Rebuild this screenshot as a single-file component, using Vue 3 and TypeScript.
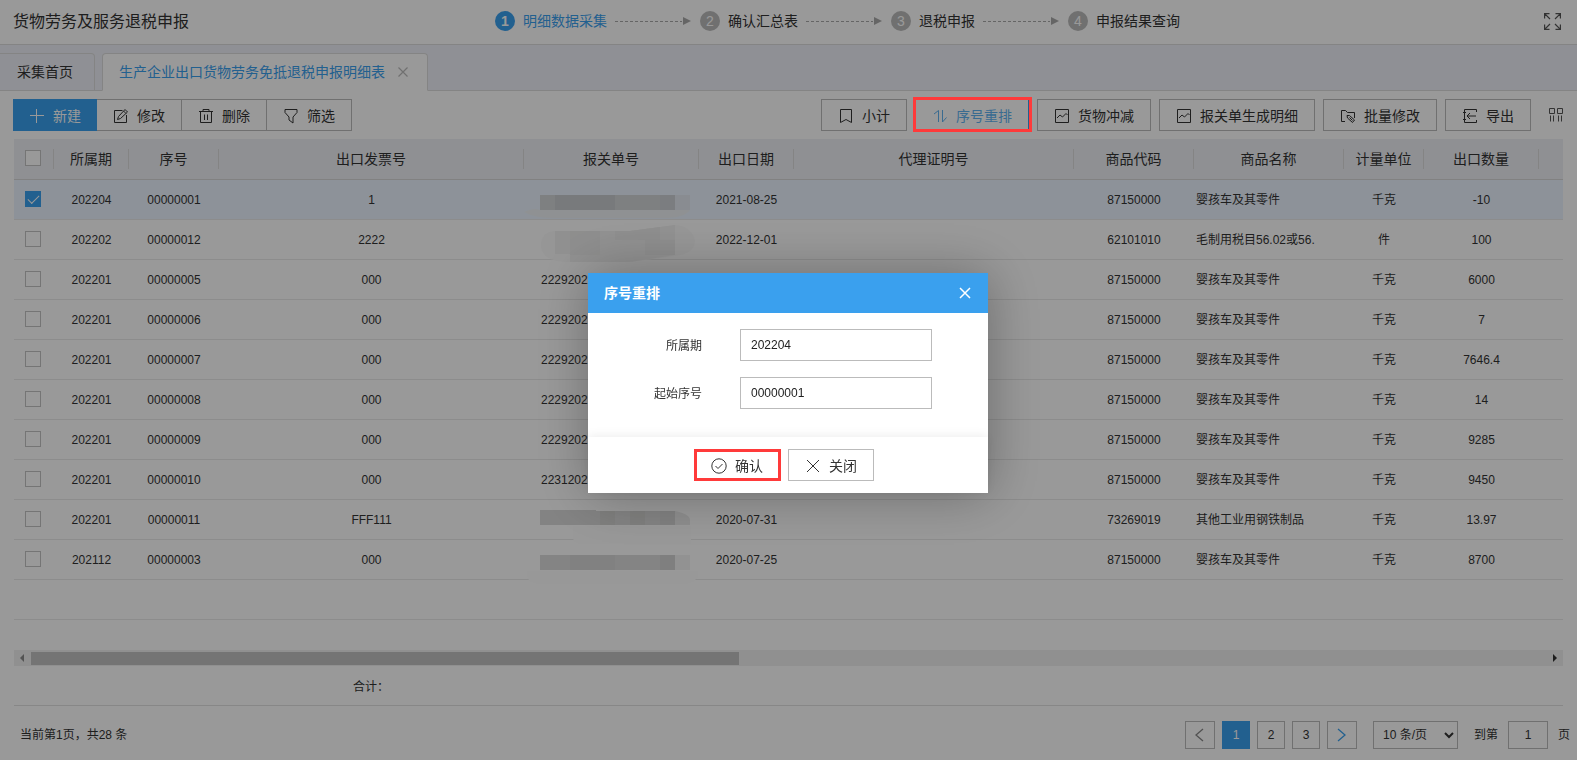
<script setup lang="ts">
import { ref } from 'vue'

interface Step {
  no: number
  label: string
}

interface Row {
  id: number
  checked: boolean
  period: string
  seq: string
  invoice: string
  customs: string
  mask: number
  date: string
  code: string
  name: string
  unit: string
  qty: string
}

const steps: Step[] = [
  { no: 1, label: '明细数据采集' },
  { no: 2, label: '确认汇总表' },
  { no: 3, label: '退税申报' },
  { no: 4, label: '申报结果查询' },
]

const headers: string[] = [
  '所属期', '序号', '出口发票号', '报关单号', '出口日期',
  '代理证明号', '商品代码', '商品名称', '计量单位', '出口数量',
]

const stroller = '婴孩车及其零件'

function makeRow(
  id: number, period: string, seq: string, invoice: string, customs: string, mask: number,
  date: string, code: string, name: string, unit: string, qty: string,
): Row {
  return { id, checked: id === 1, period, seq, invoice, customs, mask, date, code, name, unit, qty }
}

const rows = ref<Row[]>([
  makeRow(1, '202204', '00000001', '1', '', 1, '2021-08-25', '87150000', stroller, '千克', '-10'),
  makeRow(2, '202202', '00000012', '2222', '', 2, '2022-12-01', '62101010', '毛制用税目56.02或56.', '件', '100'),
  makeRow(3, '202201', '00000005', '000', '2229202', 0, '', '87150000', stroller, '千克', '6000'),
  makeRow(4, '202201', '00000006', '000', '2229202', 0, '', '87150000', stroller, '千克', '7'),
  makeRow(5, '202201', '00000007', '000', '2229202', 0, '', '87150000', stroller, '千克', '7646.4'),
  makeRow(6, '202201', '00000008', '000', '2229202', 0, '', '87150000', stroller, '千克', '14'),
  makeRow(7, '202201', '00000009', '000', '2229202', 0, '', '87150000', stroller, '千克', '9285'),
  makeRow(8, '202201', '00000010', '000', '2231202', 0, '', '87150000', stroller, '千克', '9450'),
  makeRow(9, '202201', '00000011', 'FFF111', '', 3, '2020-07-31', '73269019', '其他工业用钢铁制品', '千克', '13.97'),
  makeRow(10, '202112', '00000003', '000', '', 4, '2020-07-25', '87150000', stroller, '千克', '8700'),
])

const allChecked = ref(false)
const pages: number[] = [1, 2, 3]
const currentPage = ref(1)
const jumpPage = ref('1')
const pageSize = ref('10')
const period = ref('202204')
const startNo = ref('00000001')
</script>

<template>
  <div class="page">
    <header class="top">
      <h1 class="title">货物劳务及服务退税申报</h1>
      <ol class="steps">
        <li v-for="(s, i) in steps" :key="s.no" class="step" :class="{ active: i === 0 }">
          <span class="dot">{{ s.no }}</span>
          <span class="step-label">{{ s.label }}</span>
          <svg v-if="i < steps.length - 1" class="arrow" width="76" height="10" viewBox="0 0 76 10">
            <path d="M0 5.5H67" stroke="#a8a8a8" stroke-dasharray="3 2" />
            <path d="M68 1L76 5L68 9Z" fill="#a8a8a8" />
          </svg>
        </li>
      </ol>
      <div class="top-end">
        <button class="bare" aria-label="全屏">
          <svg width="17" height="17" viewBox="0 0 17 17" fill="none" stroke="#555" stroke-width="1.2">
            <path d="M.6 5.5V.6H5.5M.6.6L6 6M11.5.6H16.4V5.5M16.4.6L11 6M.6 11.5V16.4H5.5M.6 16.4L6 11M11.5 16.4H16.4V11.5M16.4 16.4L11 11" />
          </svg>
        </button>
      </div>
    </header>

    <nav class="tabs">
      <a href="#" class="tab first">采集首页</a>
      <a href="#" class="tab current">
        生产企业出口货物劳务免抵退税申报明细表
        <svg width="10" height="10" viewBox="0 0 10 10" stroke="#bbb" stroke-width="1.2">
          <path d="M.5.5L9.5 9.5M9.5.5L.5 9.5" />
        </svg>
      </a>
    </nav>

    <main class="content">
      <div class="toolbar">
        <div class="group">
          <button class="btn primary">
            <svg class="ico" viewBox="0 0 16 16"><path d="M7.500 1V15M1 7.500H15" /></svg>新建
          </button>
          <button class="btn">
            <svg class="ico" viewBox="0 0 16 16"><path d="M9.500 2.500H1.500V14.500H13.500V7M4.500 11.500L5.500 8.500L12 1.500L14.500 4L7.500 10.500ZM10.500 3L13 5.500" /></svg>修改
          </button>
          <button class="btn">
            <svg class="ico" viewBox="0 0 16 16"><path d="M1 3.500H15M5 3.500V1.500H11V3.500M2.500 3.500V14.500H13.500V3.500M6.500 6.500V12M9.500 6.500V12" /></svg>删除
          </button>
          <button class="btn">
            <svg class="ico" viewBox="0 0 16 16"><path d="M2 1.500H14V4.500L10 9V15L6 12V9L2 4.500Z" /></svg>筛选
          </button>
        </div>
        <div class="group right">
          <button class="btn">
            <svg class="ico" viewBox="0 0 16 16"><path d="M2.500 1.500H13.500V14.500L8 11.500L2.500 14.500Z" /></svg>小计
          </button>
          <div class="marked toolbar-mark">
            <button class="btn hover">
              <svg class="ico" viewBox="0 0 16 16"><path d="M2 6L6.500 2.500V14M10.500 2V14L14.500 9.500" /></svg>序号重排
            </button>
          </div>
          <button class="btn">
            <svg class="ico" viewBox="0 0 16 16"><path d="M1.500 1.500H14.500V14.500H1.500ZM3 10L6 7L8.500 9L12 5.500L13.500 7" /></svg>货物冲减
          </button>
          <button class="btn">
            <svg class="ico" viewBox="0 0 16 16"><path d="M1.500 1.500H14.500V14.500H1.500ZM3 10L6 7L8.500 9L12 5.500L13.500 7" /></svg>报关单生成明细
          </button>
          <button class="btn">
            <svg class="ico" viewBox="0 0 16 16"><path d="M5 13.500H1.500V2.500H5.500L7.500 4.500H14.500V10M7 7.500H9.500L14.500 12L12.500 14.500L7.500 10ZM9.500 9.500L12.500 12.500" /></svg>批量修改
          </button>
          <button class="btn">
            <svg class="ico" viewBox="0 0 16 16"><path d="M14.500 4V1.500H2.500V14.500H14.500V12M1 4.500H4M1 11.500H4M14 8H5M8 5L5 8L8 11" /></svg>导出
          </button>
          <button class="bare columns" aria-label="列设置">
            <svg width="14" height="14" viewBox="0 0 14 14" fill="none" stroke="#555">
              <path d="M.500.500H5.500V5.500H.500ZM8.500.500H13.500V5.500H8.500ZM1.500 7.500V13.500M4.500 7.500V13.500M9.500 7.500V13.500M12.500 7.500V13.500" />
            </svg>
          </button>
        </div>
      </div>

      <table class="grid">
        <colgroup>
          <col class="c-check" /><col class="c-period" /><col class="c-seq" /><col class="c-invoice" />
          <col class="c-customs" /><col class="c-date" /><col class="c-agent" /><col class="c-code" />
          <col class="c-name" /><col class="c-unit" /><col class="c-qty" /><col />
        </colgroup>
        <thead>
          <tr>
            <th><div class="th"><input v-model="allChecked" type="checkbox" aria-label="全选" /></div></th>
            <th v-for="h in headers" :key="h"><div class="th">{{ h }}</div></th>
            <th></th>
          </tr>
        </thead>
        <tbody>
          <tr v-for="r in rows" :key="r.id" :class="{ selected: r.checked }">
            <td class="check"><input v-model="r.checked" type="checkbox" :aria-label="r.seq" /></td>
            <td>{{ r.period }}</td>
            <td>{{ r.seq }}</td>
            <td>{{ r.invoice }}</td>
            <td class="customs">
              <svg v-if="r.mask === 1" class="mask" viewBox="0 0 175 39">
                <path d="M0 32Q10 27 16 30H166Q160 38 140 38H30Q10 38 0 32Z" fill="#eef2f6" />
                <path d="M16 15H151V30H16Z" fill="#d2d5d8" />
                <path d="M31 15H91V30H31Z" fill="#c8cccf" />
                <path d="M136 15H151V30H136Z" fill="#cdd0d6" />
                <path d="M151 15H166V30H151Z" fill="#e4eaf2" />
              </svg>
              <svg v-else-if="r.mask === 2" class="mask" viewBox="0 0 175 39">
                <path d="M17 26Q17 12 31 11H106L151 5Q167 6 171 20Q171 34 151 36L106 42H46Q18 42 17 26Z" fill="#fafafa" />
                <path d="M31 11H106L151 5V35L106 42H46V34H31Z" fill="#f1f1f1" />
                <path d="M46 11H76V35H46ZM91 11H106L136 7V20H91Z" fill="#ededec" />
                <path d="M121 20H151V35H121Z" fill="#ececec" />
              </svg>
              <svg v-else-if="r.mask === 3" class="mask" viewBox="0 0 175 39">
                <path d="M49 26H167V44H60Q49 44 49 38Z" fill="#fdfdfd" />
                <path d="M16 10H72V11H151V25H16Z" fill="#dadada" />
                <path d="M76 11H91V25H76ZM106 11H121V25H106Z" fill="#d4d4d2" />
                <path d="M136 11H151V25H136Z" fill="#d6d6d6" />
                <path d="M151 11Q166 14 166 20V25H151Z" fill="#ececec" />
              </svg>
              <svg v-else-if="r.mask === 4" class="mask" viewBox="0 0 175 39">
                <path d="M3 31H174V36Q170 44 158 44H18Q5 44 3 36Z" fill="#fdfdfd" />
                <path d="M16 15H151V30H16Z" fill="#dcdcdc" />
                <path d="M46 15H91V30H46Z" fill="#d7d7d8" />
                <path d="M136 15H151V30H136Z" fill="#d4d4d4" />
                <path d="M151 15H166V30H151Z" fill="#f4f4f4" />
              </svg>
              <template v-else>{{ r.customs }}</template>
            </td>
            <td>{{ r.date }}</td>
            <td></td>
            <td>{{ r.code }}</td>
            <td class="name">{{ r.name }}</td>
            <td>{{ r.unit }}</td>
            <td>{{ r.qty }}</td>
            <td></td>
          </tr>
          <tr><td colspan="12"></td></tr>
        </tbody>
      </table>
      <div class="rest"></div>

      <div class="scrollbar">
        <svg width="17" height="16" viewBox="0 0 17 16"><path d="M10 4V12L6 8Z" fill="#8a8a8a" /></svg>
        <div class="track"><div class="thumb"></div></div>
        <svg width="17" height="16" viewBox="0 0 17 16"><path d="M7 4V12L11 8Z" fill="#333" /></svg>
      </div>

      <div class="total"><span>合计：</span></div>
    </main>

    <footer class="footer">
      <span class="count">当前第1页，共28 条</span>
      <div class="pager">
        <button class="pg wide" aria-label="上一页">
          <svg width="9" height="14" viewBox="0 0 9 14" fill="none" stroke="#888" stroke-width="1.300"><path d="M8 1L1 7L8 13" /></svg>
        </button>
        <button
          v-for="p in pages" :key="p" class="pg" :class="{ on: p === currentPage }"
          @click="currentPage = p"
        >{{ p }}</button>
        <button class="pg wide" aria-label="下一页">
          <svg width="9" height="14" viewBox="0 0 9 14" fill="none" stroke="#3aa0ee" stroke-width="1.300"><path d="M1 1L8 7L1 13" /></svg>
        </button>
        <select v-model="pageSize" class="size" aria-label="每页条数">
          <option value="10">10 条/页</option>
          <option value="20">20 条/页</option>
        </select>
        <label class="jump"><span>到第</span><input v-model="jumpPage" type="text" /><span>页</span></label>
      </div>
    </footer>

    <div class="overlay">
      <section class="dialog" role="dialog" aria-labelledby="dialog-title">
        <div class="dialog-head">
          <h2 id="dialog-title">序号重排</h2>
          <button class="bare" aria-label="关闭窗口">
            <svg width="12" height="12" viewBox="0 0 12 12" stroke="#fff" stroke-width="1.500"><path d="M1 1L11 11M11 1L1 11" /></svg>
          </button>
        </div>
        <div class="dialog-body">
          <div class="field">
            <label for="f-period">所属期</label>
            <input id="f-period" v-model="period" type="text" />
          </div>
          <div class="field">
            <label for="f-start">起始序号</label>
            <input id="f-start" v-model="startNo" type="text" />
          </div>
        </div>
        <div class="dialog-foot">
          <div class="marked dialog-mark">
            <button class="btn">
              <svg class="ico" viewBox="0 0 16 16"><circle cx="8" cy="8" r="7.200" /><path d="M4.500 8L7 10.500L11.500 6" /></svg>确认
            </button>
          </div>
          <button class="btn">
            <svg class="ico" viewBox="0 0 16 16"><path d="M2 2L14 14M14 2L2 14" /></svg>关闭
          </button>
        </div>
      </section>
    </div>
  </div>
</template>

<style>
body {
  margin: 0;
}
</style>

<style scoped>
.page,
.page button,
.page input,
.page select {
  font-family: "Liberation Sans", "Noto Sans CJK SC", sans-serif;
}

.page {
  display: flex;
  flex-direction: column;
  min-height: 100vh;
  background: #fff;
  color: #333;
  font-size: 12px;
}

.page * {
  box-sizing: border-box;
}

.bare {
  display: flex;
  padding: 0;
  border: 0;
  background: none;
}

.top {
  display: flex;
  align-items: center;
  height: 45px;
  padding: 0 16px 2px 13px;
  border-bottom: 1px solid #dcdcdc;
}

.title {
  margin: 0;
  padding-bottom: 2px;
  font-size: 16px;
  font-weight: 400;
}

.steps {
  display: flex;
  flex: 1;
  justify-content: center;
  gap: 9px;
  margin: 0;
  padding: 0;
  list-style: none;
}

.step {
  display: flex;
  align-items: center;
  gap: 8px;
  font-size: 14px;
  line-height: 20px;
}

.dot {
  width: 20px;
  height: 20px;
  border-radius: 50%;
  background: #bbb;
  color: #fff;
  text-align: center;
}

.active .dot {
  background: #3aa0ee;
  font-weight: 700;
}

.active .step-label {
  color: #3aa0ee;
}

.top-end {
  display: flex;
  justify-content: flex-end;
  width: 75px;
}

.tabs {
  display: flex;
  align-items: flex-end;
  gap: 7px;
  height: 46px;
  background: #eff1f8;
  box-shadow: inset 0 -1px #dcdcdc;
}

.tab {
  display: flex;
  align-items: center;
  gap: 13px;
  height: 38px;
  border: 1px solid #dcdcdc;
  border-radius: 4px 4px 0 0;
  color: #333;
  font-size: 14px;
  text-decoration: none;
}

.first {
  padding: 0 21px 2px 17px;
  border-left: 0;
  border-top-left-radius: 0;
}

.current {
  padding: 0 19px 2px 16px;
  border-bottom-color: #fff;
  background: #fff;
  color: #3aa0ee;
}

.current svg {
  margin-top: 2px;
}

.content {
  padding: 8px 14px 0;
}

.toolbar {
  display: flex;
  justify-content: space-between;
  margin: 0 0 8px -1px;
}

.group {
  display: flex;
}

.group .btn + .btn {
  margin-left: -1px;
}

.right {
  gap: 8px;
}

.right .btn + .btn {
  margin-left: 0;
}

.btn {
  display: flex;
  align-items: center;
  gap: 8px;
  height: 32px;
  padding: 0 16px;
  border: 1px solid #bbb;
  background: #fff;
  color: #333;
  font-size: 14px;
  white-space: nowrap;
}

.ico {
  width: 16px;
  height: 16px;
  margin-top: 2px;
  fill: none;
  stroke: currentColor;
}

.primary {
  position: relative;
  border: 0;
  background: #3aa0ee;
  color: #fff;
}

.hover {
  border-color: #3aa0ee;
  color: #61b3f1;
}

.marked {
  position: relative;
}

.marked::after {
  content: "";
  position: absolute;
  z-index: 20;
  border: 3px solid #ff3a3a;
  pointer-events: none;
}

.toolbar-mark::after {
  inset: -2px -3px -1px -2px;
}

.dialog-mark::after {
  inset: 0 -1px 0 0;
}

.columns {
  align-items: center;
  margin-left: 10px;
}

.grid {
  width: 100%;
  table-layout: fixed;
  border-collapse: separate;
  border-spacing: 0;
}

.c-check { width: 40px; }
.c-period { width: 75px; }
.c-seq { width: 90px; }
.c-invoice { width: 305px; }
.c-customs { width: 175px; }
.c-date { width: 95px; }
.c-agent { width: 280px; }
.c-code { width: 120px; }
.c-name { width: 150px; }
.c-unit { width: 80px; }
.c-qty { width: 115px; }

th {
  height: 41px;
  padding: 0;
  border-bottom: 1px solid #d8d8d8;
  background: #eff1f6;
  font-size: 14px;
  font-weight: 400;
}

.th {
  display: flex;
  align-items: center;
  justify-content: center;
  height: 20px;
  padding-bottom: 2px;
  border-right: 1px solid #dcdcdc;
}

th:first-child .th {
  padding-right: 1px;
}

td {
  height: 40px;
  padding: 0;
  border-bottom: 1px solid #e9e9e9;
  text-align: center;
  line-height: 16px;
  white-space: nowrap;
}

.selected td {
  background: #ebf4ff;
}

td.check {
  padding: 0 2px 2px 0;
}

td.customs {
  padding-left: 17px;
  text-align: left;
}

td.name {
  padding-left: 2px;
  text-align: left;
}

.mask {
  position: relative;
  display: block;
  width: 175px;
  height: 39px;
  margin-left: -17px;
  overflow: visible;
}

input[type="checkbox"] {
  display: block;
  width: 16px;
  height: 16px;
  margin: 0 auto;
  border: 1px solid #c4c4c4;
  background: #fff;
  appearance: none;
}

input[type="checkbox"]:checked {
  border-color: #3aa0ee;
  background: #3aa0ee;
}

input[type="checkbox"]:checked::before {
  content: "";
  display: block;
  width: 10px;
  height: 5px;
  margin: 3px 0 0 2px;
  border: solid #fff;
  border-width: 0 0 1px 1px;
  transform: rotate(-45deg);
}

.rest {
  height: 30px;
}

.scrollbar {
  display: flex;
  height: 16px;
  background: #f1f1f1;
}

.track {
  flex: 1;
  padding: 2px 0 1px;
}

.thumb {
  width: 46.7%;
  height: 13px;
  background: #c1c1c1;
}

.total {
  display: flex;
  align-items: center;
  height: 40px;
  padding-left: 339px;
  border-bottom: 1px solid #e2e2e2;
}

.footer {
  display: flex;
  align-items: center;
  justify-content: space-between;
  padding: 15px 7px 10px 20px;
}

.count {
  padding-bottom: 4px;
}

.pager {
  display: flex;
  align-items: center;
  gap: 7px;
}

.pg {
  display: flex;
  align-items: center;
  justify-content: center;
  width: 28px;
  height: 28px;
  padding: 0;
  border: 1px solid #bbb;
  background: #fff;
  color: #333;
  font-size: 12px;
}

.pg.wide {
  width: 30px;
}

.pg.on {
  border-color: #3aa0ee;
  background: #3aa0ee;
  color: #fff;
}

.size {
  width: 85px;
  height: 28px;
  margin-left: 9px;
  padding: 0 0 0 5px;
  border: 1px solid #bbb;
  border-radius: 0;
  background: #fff;
  color: #333;
  font-size: 12px;
}

.jump {
  display: flex;
  align-items: center;
  gap: 10px;
  margin-left: 9px;
}

.jump span {
  padding-bottom: 4px;
}

.jump input {
  width: 40px;
  height: 28px;
  padding: 0;
  border: 1px solid #bbb;
  color: #333;
  font-size: 12px;
  text-align: center;
}

.overlay {
  position: fixed;
  inset: 0;
  z-index: 10;
  display: flex;
  align-items: center;
  justify-content: center;
  padding: 6px 1px 0 0;
  background: rgba(0, 0, 0, 0.4);
}

.dialog {
  width: 400px;
  background: #fff;
  box-shadow: 1px 1px 50px rgba(0, 0, 0, 0.3);
}

.dialog-head {
  display: flex;
  align-items: center;
  justify-content: space-between;
  height: 40px;
  padding: 0 17px 0 16px;
  background: #3aa0ee;
  color: #fff;
}

.dialog-head h2 {
  margin: 0;
  padding-bottom: 2px;
  font-size: 14px;
  font-weight: 700;
}

.dialog-body {
  display: flex;
  flex-direction: column;
  gap: 16px;
  padding: 16px 56px 28px 0;
}

.field {
  display: flex;
  align-items: center;
  justify-content: flex-end;
  gap: 38px;
}

.field label {
  padding-bottom: 2px;
}

.field input {
  width: 192px;
  height: 32px;
  padding: 0 10px;
  border: 1px solid #bbb;
  color: #222;
  font-size: 12px;
}

.dialog-foot {
  display: flex;
  justify-content: center;
  gap: 8px;
  padding: 12px 8px 12px 0;
  box-shadow: 0 -1px 10px rgba(0, 0, 0, 0.08);
}
</style>
